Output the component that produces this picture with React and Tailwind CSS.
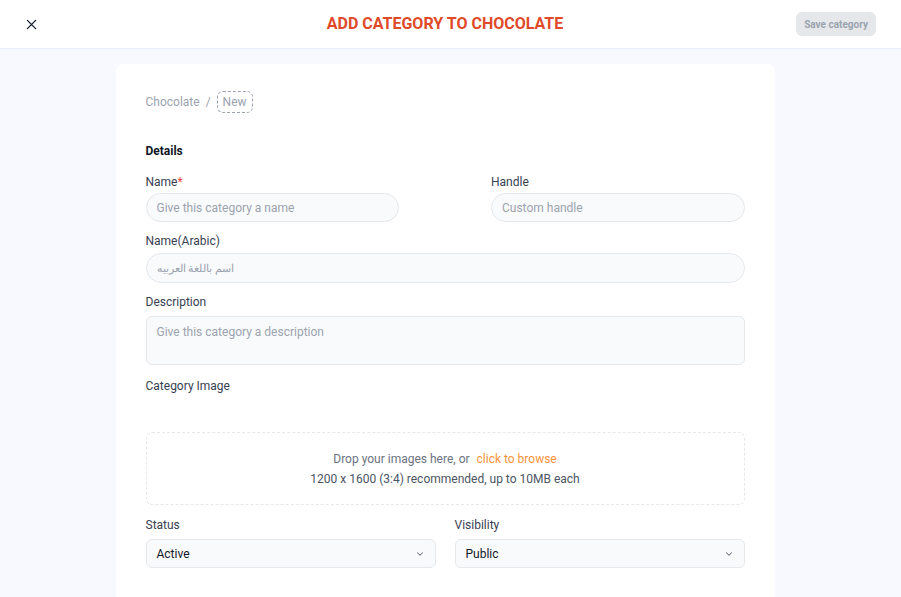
import React from "react";

const ChevronDown = () => (
  <svg width="10" height="10" viewBox="0 0 24 24" fill="none" stroke="#6b7280" strokeWidth="2.5" strokeLinecap="round" strokeLinejoin="round">
    <path d="M6 9l6 6 6-6" />
  </svg>
);

const Label = ({ children, className = "" }) => (
  <div className={`text-[12px] leading-4 text-[#374151] ${className}`}>{children}</div>
);

const App = () => {
  return (
    <div className="min-h-screen bg-[#f8f9fe] font-['Roboto',sans-serif] text-[12px]">
      {/* Header */}
      <div className="h-[49px] bg-white border-b border-[#e8eefb] grid grid-cols-[1fr_auto_1fr] items-center pl-6 pr-[25px]">
        <button className="w-[14px] h-[14px] flex items-center justify-center">
          <svg width="11" height="11" viewBox="0 0 12 12" stroke="#111827" strokeWidth="1.4" strokeLinecap="round">
            <path d="M1.5 1.5l9 9M10.5 1.5l-9 9" />
          </svg>
        </button>
        <h1 className="ml-[-10px] text-[16px] font-bold text-[#e04a2a]">ADD CATEGORY TO CHOCOLATE</h1>
        <button className="justify-self-end h-6 px-2 rounded-md bg-[#e5e7eb] text-[10px] font-bold text-[#9ca3af]">
          Save category
        </button>
      </div>

      {/* Card */}
      <div className="pt-[15px] flex justify-center">
        <div className="w-[659px] ml-[-11px] bg-white rounded-lg px-[30px] pt-[27px] pb-10">
          <div className="flex items-center gap-[6px] text-[#9ca3af]">
            <span>Chocolate</span>
            <span>/</span>
            <span className="h-[22px] px-[5px] flex items-center border border-dashed border-[#9ca3af] rounded-md">New</span>
          </div>

          <div className="mt-[30px] font-bold text-[#111827] leading-4">Details</div>

          <div className="mt-[15px] grid grid-cols-2 gap-x-[92px]">
            <div>
              <Label>
                Name<span className="text-[#ef4444]">*</span>
              </Label>
              <input
                placeholder="Give this category a name"
                className="mt-[3px] w-full h-[29px] rounded-full bg-[#f9fafb] border border-[#e5e7eb] px-[10px] text-[12px] placeholder:text-[#9ca3af] outline-none"
              />
            </div>
            <div>
              <Label>Handle</Label>
              <input
                placeholder="Custom handle"
                className="mt-[3px] w-full h-[29px] rounded-full bg-[#f9fafb] border border-[#e5e7eb] px-[10px] text-[12px] placeholder:text-[#9ca3af] outline-none"
              />
            </div>
          </div>

          <Label className="mt-[11px]">Name(Arabic)</Label>
          <input
            placeholder="اسم باللغة العربيه"
            className="mt-[4px] w-full h-[30px] rounded-full bg-[#f9fafb] border border-[#e5e7eb] px-[10px] text-[11px] placeholder:text-[#9ca3af] outline-none"
          />

          <Label className="mt-[11px]">Description</Label>
          <textarea
            placeholder="Give this category a description"
            className="mt-[6px] block w-full h-[49px] resize-none rounded-md bg-[#f9fafb] border border-[#e5e7eb] px-[10px] py-[6px] text-[12px] placeholder:text-[#9ca3af] outline-none"
          />

          <Label className="mt-[13px]">Category Image</Label>

          <div className="mt-[38px] h-[73px] rounded-md border border-dashed border-[#e5e7eb] flex flex-col items-center justify-center gap-[2px]">
            <div className="text-[#6b7280]">
              Drop your images here, or <span className="ml-1 text-[#fb923c]">click to browse</span>
            </div>
            <div className="text-[#4b5563]">1200 x 1600 (3:4) recommended, up to 10MB each</div>
          </div>

          <div className="mt-[12px] grid grid-cols-2 gap-x-[19px]">
            <div>
              <Label>Status</Label>
              <div className="mt-[6px] h-[29px] rounded-md bg-[#f9fafb] border border-[#e5e7eb] px-[10px] flex items-center justify-between text-[#111827]">
                <span>Active</span>
                <ChevronDown />
              </div>
            </div>
            <div>
              <Label>Visibility</Label>
              <div className="mt-[6px] h-[29px] rounded-md bg-[#f9fafb] border border-[#e5e7eb] px-[10px] flex items-center justify-between text-[#111827]">
                <span>Public</span>
                <ChevronDown />
              </div>
            </div>
          </div>
        </div>
      </div>
    </div>
  );
};

export default App;
